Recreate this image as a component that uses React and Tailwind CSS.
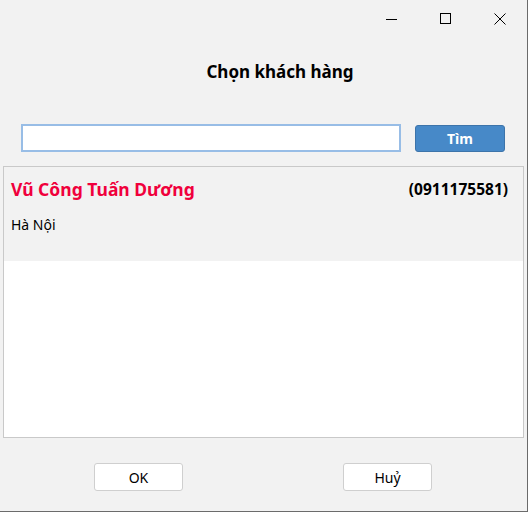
export default function App() {
  return (
    <div
      className="w-[528px] h-[512px] bg-[#f2f2f2] border-r border-b border-[#6b6b6b] flex flex-col"
      style={{ fontFamily: '"Noto Sans", "Open Sans", sans-serif' }}
    >
      {/* title bar */}
      <div className="h-[38px] flex justify-end items-center">
        <button className="w-[54px] h-[38px] flex items-center justify-center">
          <svg width="12" height="12" viewBox="0 0 12 12">
            <path d="M0 6.5h11" stroke="#000" strokeWidth="1" />
          </svg>
        </button>
        <button className="w-[54px] h-[38px] flex items-center justify-center">
          <svg width="12" height="12" viewBox="0 0 12 12">
            <rect x="0.5" y="0.5" width="10" height="10" fill="none" stroke="#000" strokeWidth="1" />
          </svg>
        </button>
        <button className="w-[54px] h-[38px] flex items-center justify-center">
          <svg width="12" height="12" viewBox="0 0 12 12">
            <path d="M0.5 0.5l11 11M11.5 0.5l-11 11" stroke="#000" strokeWidth="1" />
          </svg>
        </button>
      </div>

      <div className="h-[68px] flex items-center justify-center pl-[33px] pb-[1px]">
        <h1 className="text-[17px] font-bold text-black">Chọn khách hàng</h1>
      </div>

      <div className="flex items-center px-[21px] gap-[14px] h-[35px] mt-[14px]">
        <input
          className="w-[380px] h-[28px] bg-white border-2 border-[#98bde6] outline-none px-1 text-sm"
          defaultValue=""
        />
        <button className="w-[90px] h-[27px] mt-[1px] rounded-[3px] bg-[#4789c8] border border-[#3d74aa] text-white text-[14px] font-bold">
          Tìm
        </button>
      </div>

      <div className="mt-[11px] mx-[3px] h-[272px] border border-[#c9c9c9] bg-white">
        <div className="h-[94px] bg-[#f2f2f2] px-[7px] pt-[9px]">
          <div className="flex justify-between items-center">
            <span className="text-[17.5px] font-bold text-[#f0003c]">Vũ Công Tuấn Dương</span>
            <span className="text-[15.5px] font-bold text-black mr-[8px]">(0911175581)</span>
          </div>
          <div className="mt-[12px] text-[14px] text-black">Hà Nội</div>
        </div>
      </div>

      <div className="flex justify-between pl-[94px] pr-[95px] mt-[25px]">
        <button className="w-[89px] h-[28px] bg-white border border-[#cfcfcf] rounded-[3px] text-[14px] text-black">
          OK
        </button>
        <button className="w-[89px] h-[28px] bg-white border border-[#cfcfcf] rounded-[3px] text-[14px] text-black">
          Huỷ
        </button>
      </div>
    </div>
  );
}
